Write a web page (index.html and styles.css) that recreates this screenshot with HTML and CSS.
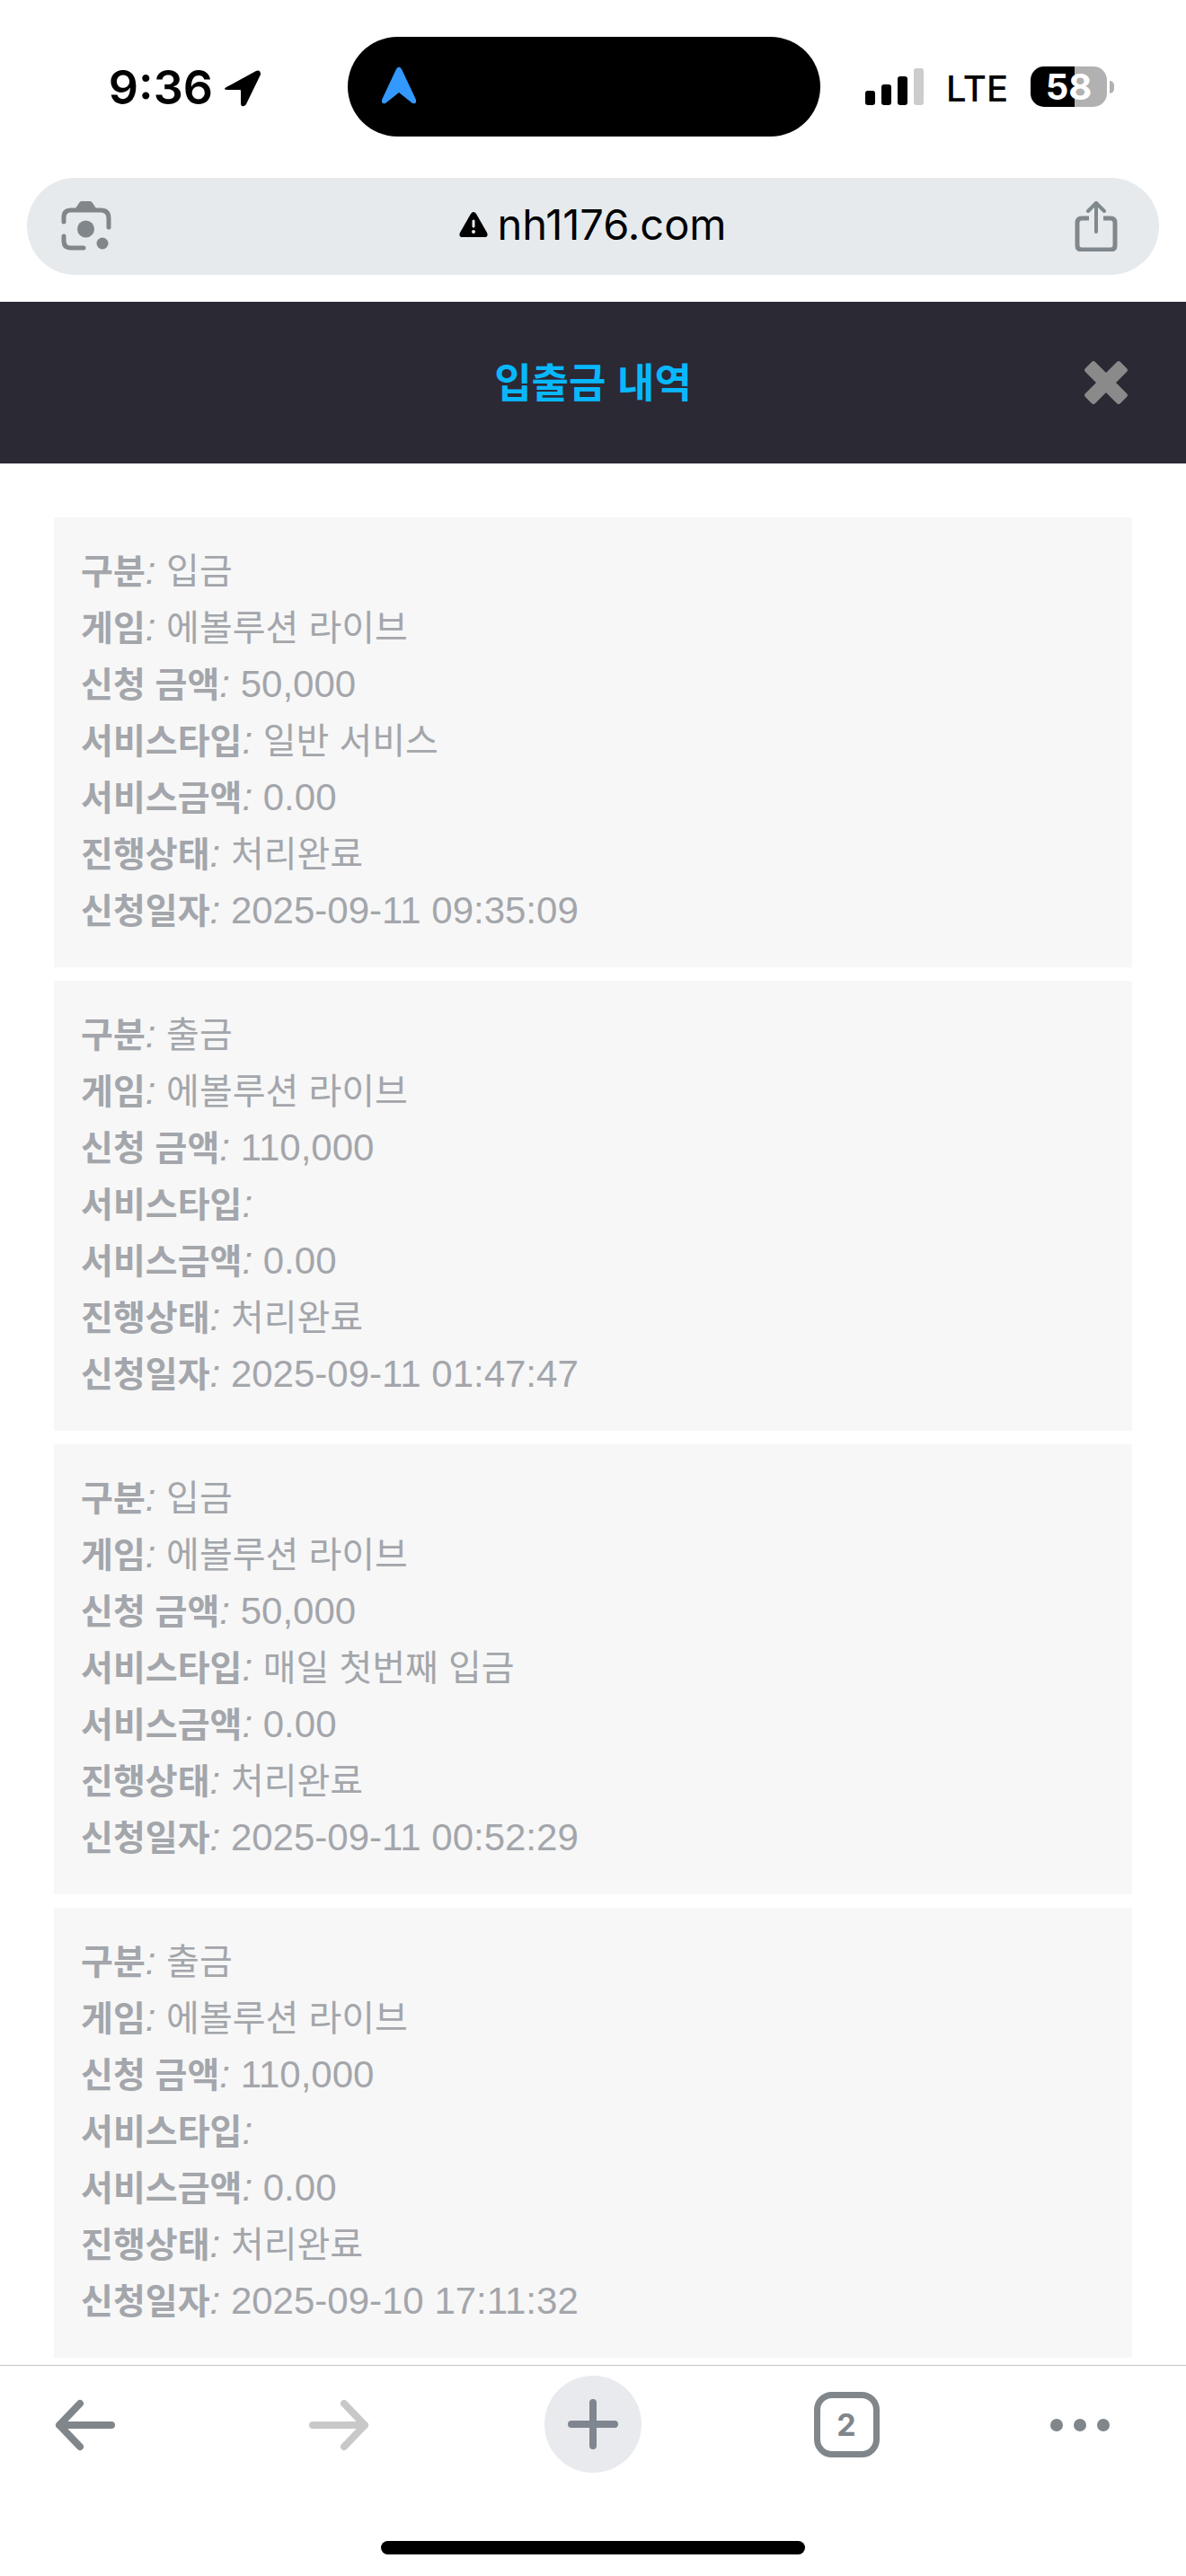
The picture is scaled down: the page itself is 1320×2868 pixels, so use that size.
FILE: index.html
```html
<!DOCTYPE html>
<html lang="ko">
<head>
<meta charset="utf-8">
<meta name="viewport" content="width=device-width, initial-scale=1">
<title>입출금 내역</title>
<link rel="stylesheet" href="styles.css">
</head>
<body>
<div class="status">
  <div class="status-left">
    <span class="clock">9:36</span>
    <svg class="location" width="42" height="42" viewBox="0 0 42 42" aria-hidden="true"><path d="M3 20 36 2q5-2 5 4L25 39q-2 3-5 2-1-1-1-3V24q0-1-1-1H4q-3 0-3-1 0-1 2-2Z"/></svg>
  </div>
  <div class="island">
    <svg width="38" height="42" viewBox="0 0 38 42" aria-hidden="true"><path d="M16 3q3-5 6 0L38 37q1 5-4 4L19 29 4 41q-5 1-4-4Z" fill="#3399ff"/></svg>
  </div>
  <div class="status-right">
    <svg width="65" height="41" viewBox="0 0 65 41" aria-hidden="true"><rect y="25" width="11" height="16" rx="3"/><rect x="18" y="18" width="11" height="23" rx="3"/><rect x="36" y="9" width="11" height="32" rx="3"/><rect x="54" width="11" height="41" rx="3" fill="#ccc"/></svg>
    <span class="network">LTE</span>
    <span class="battery"><span class="battery-body">58</span><span class="battery-tip"></span></span>
  </div>
</div>

<div class="address">
  <button class="tool lens" type="button" aria-label="Lens">
    <svg width="56" height="56" viewBox="0 0 56 56" fill="none" stroke="#80868a" stroke-width="5" stroke-linecap="round" aria-hidden="true"><path d="M3 23v-5q0-8 8-8h33q9 0 9 9v10M3 39v5q0 8 8 8h14"/><path d="M16 8 20 2q1-2 3-2h9q2 0 3 2l4 6Z" fill="#80868a" stroke="none"/><circle cx="27.500" cy="31" r="9.500" fill="#80868a" stroke="none"/><circle cx="46" cy="47" r="6.500" fill="#80868a" stroke="none"/></svg>
  </button>
  <button class="url" type="button">
    <svg width="32" height="28" viewBox="0 0 32 28" aria-hidden="true"><path d="M13 2q3-4 6 0l12 21q2 5-3 5H4q-5 0-3-5Z"/><path d="M16 10v6" stroke="#e6eaed" stroke-width="3" stroke-linecap="round"/><circle cx="16" cy="22" r="2" fill="#e6eaed"/></svg>
    <span>nh1176.com</span>
  </button>
  <button class="tool share" type="button" aria-label="공유">
    <svg width="48" height="56" viewBox="0 0 48 56" fill="none" stroke="#80888d" stroke-width="5" aria-hidden="true"><path d="M16 19H8q-5 0-5 5v25q0 5 5 5h32q5 0 5-5V24q0-5-5-5h-8"/><path d="M24 34V3M15 11l9-9 9 9" stroke-linecap="round" stroke-linejoin="round" stroke-width="4"/></svg>
  </button>
</div>

<header class="header">
  <h1>입출금 내역</h1>
  <button class="close" type="button" aria-label="닫기">
    <svg width="48" height="48" viewBox="0 0 48 48" aria-hidden="true"><path d="M8 1q2-2 4 0l12 12L36 1q2-2 4 0l7 7q2 2 0 4L35 24l12 12q2 2 0 4l-7 7q-2 2-4 0L24 35 12 47q-2 2-4 0l-7-7q-2-2 0-4l12-12L1 12q-2-2 0-4Z" fill="#8a8a8a"/></svg>
  </button>
</header>

<main class="records">
  <dl class="card">
    <div><dt>구분<i>:</i></dt> <dd>입금</dd></div>
    <div><dt>게임<i>:</i></dt> <dd>에볼루션 라이브</dd></div>
    <div><dt>신청 금액<i>:</i></dt> <dd class="number">50,000</dd></div>
    <div><dt>서비스타입<i>:</i></dt> <dd>일반 서비스</dd></div>
    <div><dt>서비스금액<i>:</i></dt> <dd class="number">0.00</dd></div>
    <div><dt>진행상태<i>:</i></dt> <dd>처리완료</dd></div>
    <div><dt>신청일자<i>:</i></dt> <dd class="number">2025-09-11 09:35:09</dd></div>
  </dl>
  <dl class="card">
    <div><dt>구분<i>:</i></dt> <dd>출금</dd></div>
    <div><dt>게임<i>:</i></dt> <dd>에볼루션 라이브</dd></div>
    <div><dt>신청 금액<i>:</i></dt> <dd class="number">110,000</dd></div>
    <div><dt>서비스타입<i>:</i></dt> <dd></dd></div>
    <div><dt>서비스금액<i>:</i></dt> <dd class="number">0.00</dd></div>
    <div><dt>진행상태<i>:</i></dt> <dd>처리완료</dd></div>
    <div><dt>신청일자<i>:</i></dt> <dd class="number">2025-09-11 01:47:47</dd></div>
  </dl>
  <dl class="card">
    <div><dt>구분<i>:</i></dt> <dd>입금</dd></div>
    <div><dt>게임<i>:</i></dt> <dd>에볼루션 라이브</dd></div>
    <div><dt>신청 금액<i>:</i></dt> <dd class="number">50,000</dd></div>
    <div><dt>서비스타입<i>:</i></dt> <dd>매일 첫번째 입금</dd></div>
    <div><dt>서비스금액<i>:</i></dt> <dd class="number">0.00</dd></div>
    <div><dt>진행상태<i>:</i></dt> <dd>처리완료</dd></div>
    <div><dt>신청일자<i>:</i></dt> <dd class="number">2025-09-11 00:52:29</dd></div>
  </dl>
  <dl class="card">
    <div><dt>구분<i>:</i></dt> <dd>출금</dd></div>
    <div><dt>게임<i>:</i></dt> <dd>에볼루션 라이브</dd></div>
    <div><dt>신청 금액<i>:</i></dt> <dd class="number">110,000</dd></div>
    <div><dt>서비스타입<i>:</i></dt> <dd></dd></div>
    <div><dt>서비스금액<i>:</i></dt> <dd class="number">0.00</dd></div>
    <div><dt>진행상태<i>:</i></dt> <dd>처리완료</dd></div>
    <div><dt>신청일자<i>:</i></dt> <dd class="number">2025-09-10 17:11:32</dd></div>
  </dl>
</main>

<footer class="bottom">
  <nav class="toolbar">
    <button class="nav-button back" type="button" aria-label="뒤로">
      <svg width="68" height="70" viewBox="0 0 68 70" fill="none" stroke="#80868a" stroke-width="8" stroke-linecap="round" stroke-linejoin="round" aria-hidden="true"><path d="M63 36H5M28 12 5 36l23 24"/></svg>
    </button>
    <button class="nav-button" type="button" aria-label="앞으로" disabled>
      <svg width="68" height="70" viewBox="0 0 68 70" fill="none" stroke="#c8c8c8" stroke-width="8" stroke-linecap="round" stroke-linejoin="round" aria-hidden="true"><path d="M5 36h58M40 12l23 24-23 24"/></svg>
    </button>
    <button class="nav-button plus" type="button" aria-label="새 탭">
      <svg width="56" height="56" viewBox="0 0 56 56" fill="none" stroke="#80868f" stroke-width="8" stroke-linecap="round" aria-hidden="true"><path d="M28 4v48M4 28h48"/></svg>
    </button>
    <button class="nav-button" type="button" aria-label="탭 2개"><span class="tabs">2</span></button>
    <button class="nav-button" type="button" aria-label="더보기">
      <svg width="68" height="16" viewBox="0 0 68 16" fill="#80868a" aria-hidden="true"><circle cx="9" cy="9" r="7"/><circle cx="35" cy="9" r="7"/><circle cx="61" cy="9" r="7"/></svg>
    </button>
  </nav>
  <div class="home"></div>
</footer>
</body>
</html>
```
FILE: styles.css
```css
* {
  box-sizing: border-box;
}

body {
  margin: 0;
  min-height: 100vh;
  display: flex;
  flex-direction: column;
  background: #fff;
  color: #000;
  font-family: Inter, "Noto Sans CJK KR", sans-serif;
}

button {
  margin: 0;
  padding: 0;
  border: 0;
  background: none;
  color: inherit;
  font: inherit;
}

svg {
  display: block;
  flex: none;
}

.status {
  display: grid;
  grid-template-columns: 387fr 526fr 407fr;
  align-items: center;
  padding: 41px 0 46px;
}

.status-left {
  display: flex;
  align-items: center;
  justify-content: flex-end;
  gap: 12px;
  padding: 3px 96px 0 0;
}

.clock {
  font-size: 52px;
  font-weight: 600;
  line-height: 60px;
}

.island {
  display: flex;
  align-items: center;
  height: 111px;
  padding: 0 38px 4px;
  border-radius: 56px;
  background: #000;
}

.status-right {
  display: flex;
  align-items: center;
  gap: 25px;
  padding-left: 50px;
}

.network {
  padding-top: 4px;
  font-size: 40px;
  font-weight: 500;
  line-height: 48px;
}

.battery {
  display: flex;
  align-items: center;
  gap: 3px;
}

.battery-body {
  width: 85px;
  border-radius: 15px;
  background: linear-gradient(90deg, #000 58%, #b1b1b1 58%);
  color: #fff;
  font-size: 40px;
  font-weight: 700;
  line-height: 45px;
  text-align: center;
}

.battery-tip {
  width: 5px;
  height: 14px;
  border-radius: 0 5px 5px 0;
  background: #b1b1b1;
}

.address {
  display: grid;
  grid-template-columns: 1fr auto 1fr;
  align-items: center;
  height: 108px;
  margin: 0 30px 30px;
  padding: 0 38px;
  border-radius: 54px;
  background: #e6eaed;
}

.share {
  justify-self: end;
  padding-right: 8px;
}

.lens {
  justify-self: start;
}

.url {
  display: flex;
  align-items: center;
  gap: 10px;
  padding-bottom: 4px;
  font-size: 47px;
  line-height: 60px;
}

.header {
  display: grid;
  grid-template-columns: 1fr auto 1fr;
  align-items: center;
  height: 180px;
  padding: 0 65px;
  background: #2b2934;
}

.header h1 {
  grid-column: 2;
  margin: 0;
  padding-bottom: 4px;
  color: #08b8ff;
  font-family: "Noto Sans CJK KR", sans-serif;
  font-size: 45px;
  font-weight: 700;
  line-height: 60px;
}

.close {
  justify-self: end;
}

.records {
  flex: 1;
  display: flex;
  flex-direction: column;
  gap: 15px;
  padding: 60px 60px 8px;
}

.card {
  margin: 0;
  padding: 28px 30px 32px;
  background: #f7f7f7;
  color: #a3a6ab;
  font-family: "Liberation Sans", "Noto Sans CJK KR", sans-serif;
  font-size: 42px;
  line-height: 63px;
}

.card div {
  height: 63px;
}

.card dt,
.card dd {
  display: inline;
  margin: 0;
}

.card dt {
  font-size: 39px;
  font-weight: 700;
}

.card dt i {
  font-size: 42px;
  font-weight: 400;
}

.card dd {
  font-size: 40px;
}

.card .number {
  font-size: 42px;
}

.bottom {
  padding: 11px 0 24px;
  border-top: 1px solid #c8c8c8;
}

.toolbar {
  display: grid;
  grid-template-columns: 236fr 282fr 284fr 280fr 238fr;
  align-items: center;
  justify-items: center;
}

.nav-button {
  display: flex;
  align-items: center;
  justify-content: center;
  width: 108px;
  height: 108px;
}

.back {
  justify-self: start;
  margin-left: 41px;
}

.plus {
  border-radius: 50%;
  background: #e8eaed;
}

.tabs {
  width: 73px;
  height: 73px;
  border: 7px solid #80868a;
  border-radius: 20px;
  color: #80868a;
  font-size: 34px;
  font-weight: 700;
  line-height: 59px;
}

.home {
  width: 472px;
  height: 15px;
  margin: 76px auto 0;
  border-radius: 8px;
  background: #000;
}
```
